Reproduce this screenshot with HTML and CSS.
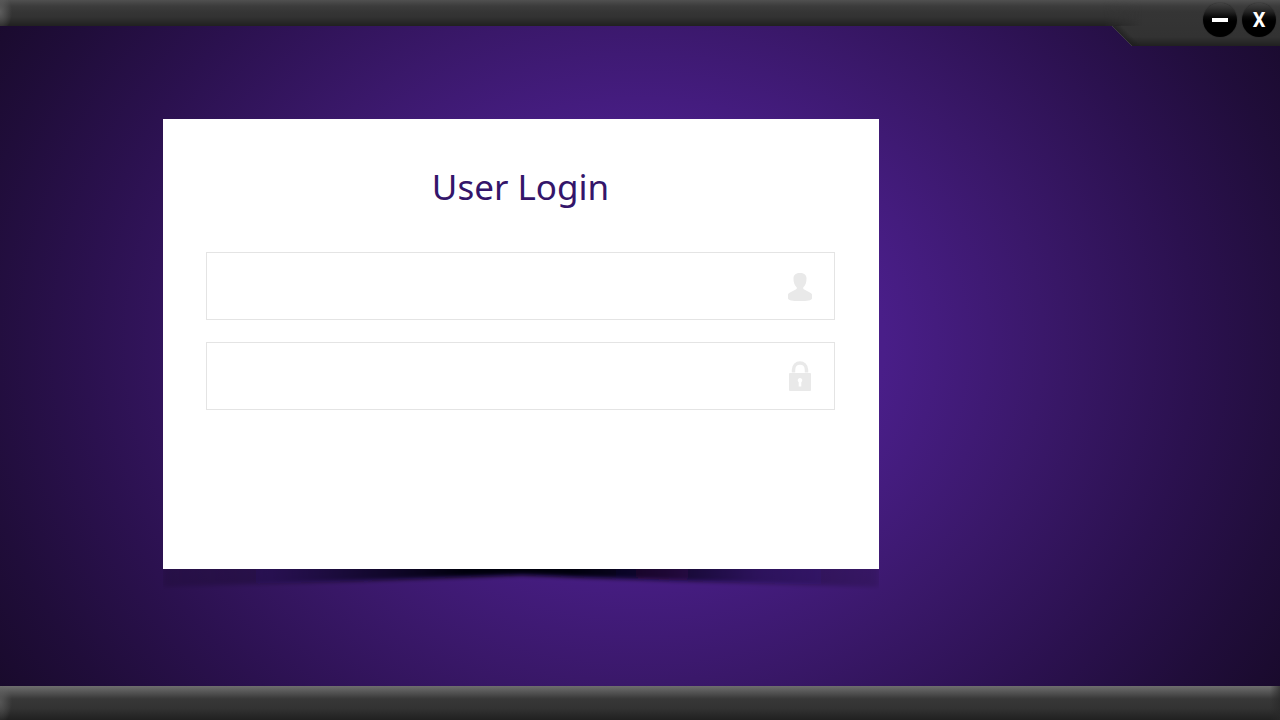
FILE: index.html
```html
<!DOCTYPE html>
<html lang="en">
<head>
  <meta charset="utf-8">
  <meta name="viewport" content="width=device-width, initial-scale=1">
  <title>User Login</title>
  <link rel="stylesheet" href="styles.css">
</head>
<body>
  <div class="window">
    <header class="titlebar">
      <div class="titlebar-tab">
        <svg class="tab-slope" viewBox="0 0 40 46" aria-hidden="true">
          <defs>
            <linearGradient id="slope-fill" x1="0" y1="0" x2="0" y2="46" gradientUnits="userSpaceOnUse">
              <stop offset="0" stop-color="#505050"/>
              <stop offset=".13" stop-color="#3c3c3c"/>
              <stop offset=".26" stop-color="#353535"/>
              <stop offset=".8" stop-color="#323232"/>
              <stop offset="1" stop-color="#202020"/>
            </linearGradient>
            <linearGradient id="slope-fade" x1="0" y1="0" x2="1" y2="0">
              <stop offset="0" stop-color="#000"/>
              <stop offset="1" stop-color="#fff"/>
            </linearGradient>
            <linearGradient id="slope-shade" x1="20" y1="36" x2="25" y2="31" gradientUnits="userSpaceOnUse">
              <stop offset="0" stop-color="#1c1c1c" stop-opacity=".7"/>
              <stop offset="1" stop-color="#1c1c1c" stop-opacity="0"/>
            </linearGradient>
            <mask id="slope-mask">
              <rect width="40" height="26" fill="url(#slope-fade)"/>
              <rect y="26" width="40" height="20" fill="#fff"/>
            </mask>
          </defs>
          <path d="M10 25.500H40V46H30L10 26Z" fill="#2b2b2b"/>
          <path d="M0 0H40V46H30L10 26H0Z" fill="url(#slope-fill)" mask="url(#slope-mask)"/>
          <path d="M10 26L30 46H40V36L26 22Z" fill="url(#slope-shade)"/>
          <path d="M10 26L30 46" stroke="#48434d" stroke-width=".7"/>
        </svg>
        <div class="controls">
          <button class="control" type="button" aria-label="Minimize">
            <svg class="minimize-mark" viewBox="0 0 16 4" aria-hidden="true"><rect width="16" height="4" fill="#fff"/></svg>
          </button>
          <button class="control" type="button" aria-label="Close">X</button>
        </div>
      </div>
    </header>

    <main class="stage">
      <form class="card">
        <h1 class="card-title">User Login</h1>
        <div class="field">
          <input class="field-input" type="text" name="username" aria-label="User name" autocomplete="username">
          <svg class="field-icon" viewBox="0 0 24 30" aria-hidden="true">
            <path d="M12 2C15.800 2 18.300 3.500 18.500 7C18.700 11.500 17.300 14.500 15.200 16.500V17.500C16 19.300 23 21 24 23.500V27.500C23 29.500 20 30 12 30S1 29.500 0 27.500V23.500C1 21 8 19.300 8.800 17.500V16.500C6.700 14.500 5.300 11.500 5.500 7C5.700 3.500 8.200 2 12 2Z" fill="#e9e9e9"/>
          </svg>
        </div>
        <div class="field">
          <input class="field-input" type="password" name="password" aria-label="Password" autocomplete="current-password">
          <svg class="field-icon" viewBox="0 0 24 30" aria-hidden="true">
            <path d="M5.500 11.500V9C5.500 -.4 18.500 -.4 18.500 9V11.500" fill="none" stroke="#e9e9e9" stroke-width="3.500"/>
            <rect x="1" y="12" width="22" height="18" rx="1" fill="#e9e9e9"/>
            <path d="M12 17A2.300 2.300 0 0 1 13.300 21.200V25.500H10.700V21.200A2.300 2.300 0 0 1 12 17Z" fill="#fff"/>
          </svg>
        </div>
        <svg class="card-shadow" viewBox="0 0 716 30" preserveAspectRatio="none" aria-hidden="true">
          <defs>
            <linearGradient id="shadow-fill" x1="0" y1="0" x2="1" y2="0">
              <stop offset="0" stop-color="#0a0618" stop-opacity=".12"/>
              <stop offset=".15" stop-color="#0a0618" stop-opacity=".25"/>
              <stop offset=".28" stop-color="#0a0618" stop-opacity=".65"/>
              <stop offset=".42" stop-color="#050308"/>
              <stop offset=".57" stop-color="#030310"/>
              <stop offset=".7" stop-color="#0a0618" stop-opacity=".75"/>
              <stop offset=".83" stop-color="#0a0618" stop-opacity=".35"/>
              <stop offset="1" stop-color="#0a0618" stop-opacity=".12"/>
            </linearGradient>
            <filter id="shadow-soften" x="-5%" y="-60%" width="110%" height="220%">
              <feGaussianBlur stdDeviation="3 2"/>
            </filter>
          </defs>
          <path d="M0 -10H716V18Q520 12 358 6Q200 12 0 18Z" fill="url(#shadow-fill)" filter="url(#shadow-soften)"/>
        </svg>
      </form>
    </main>

    <footer class="statusbar"></footer>
  </div>
</body>
</html>
```
FILE: styles.css
```css
* {
  box-sizing: border-box;
}

body {
  margin: 0;
  font-family: "Noto Sans", "Open Sans", sans-serif;
}

.window {
  display: flex;
  flex-direction: column;
  min-height: 100vh;
  background: radial-gradient(ellipse 840px 700px at 50% 48%, #4a1e8a 0%, #491e88 29%, #3a186a 48%, #2b114f 66%, #200d3a 80%, #160926 95%);
}

.titlebar {
  position: relative;
  height: 26px;
  background:
    radial-gradient(ellipse 12px 20px at 0 12px, rgba(110, 110, 110, 0.7), rgba(90, 90, 90, 0)),
    linear-gradient(#505050 0, #3c3c3c 6px, #353535 12px, #323232 17px, #202020 26px);
}

.titlebar-tab {
  position: absolute;
  top: 0;
  right: 0;
  display: flex;
  height: 46px;
}

.tab-slope {
  width: 40px;
  height: 46px;
}

.controls {
  display: flex;
  gap: 5px;
  padding: 3px 4px 0 61px;
  background: linear-gradient(#505050 0, #3c3c3c 6px, #353535 12px, #323232 37px, #202020 46px);
}

.control {
  display: flex;
  align-items: center;
  justify-content: center;
  width: 34px;
  height: 34px;
  padding: 0;
  border: 0;
  border-radius: 50%;
  background: linear-gradient(#444 0, #222 9px, #090909 14px, #000 18px);
  box-shadow: 0 0 1px #111;
  color: #fff;
  font: bold 20px/34px Roboto, sans-serif;
}

.minimize-mark {
  width: 16px;
  height: 4px;
}

.stage {
  flex: 1;
  padding: 93px 163px 80px;
}

.card {
  position: relative;
  display: flex;
  flex-direction: column;
  gap: 22px;
  max-width: 716px;
  min-height: 450px;
  padding: 42px 44px 42px 43px;
  background: #fff;
}

.card-title {
  margin: 0 0 17px;
  color: #34156a;
  font-size: 35px;
  font-weight: 400;
  line-height: 52px;
  text-align: center;
}

.field {
  display: flex;
  align-items: center;
  height: 68px;
  padding-right: 22px;
  border: 1px solid #e4e4e4;
}

.field-input {
  flex: 1;
  min-width: 0;
  height: 100%;
  padding: 0 20px;
  border: 0;
  outline: 0;
  background: transparent;
  color: #34156a;
  font: 20px "Noto Sans", sans-serif;
}

.field-icon {
  width: 24px;
  height: 30px;
}

.card-shadow {
  position: absolute;
  top: 100%;
  left: 0;
  width: 100%;
  height: 30px;
}

.statusbar {
  height: 34px;
  background:
    radial-gradient(ellipse 12px 22px at 0 16px, rgba(100, 100, 100, 0.7), rgba(80, 80, 80, 0)),
    linear-gradient(270deg, rgba(40, 40, 40, 0.7), rgba(50, 50, 50, 0) 10px),
    linear-gradient(#6e6e6e 0, #555 6px, #373737 13px, #333 22px, #202020 34px);
}
```
